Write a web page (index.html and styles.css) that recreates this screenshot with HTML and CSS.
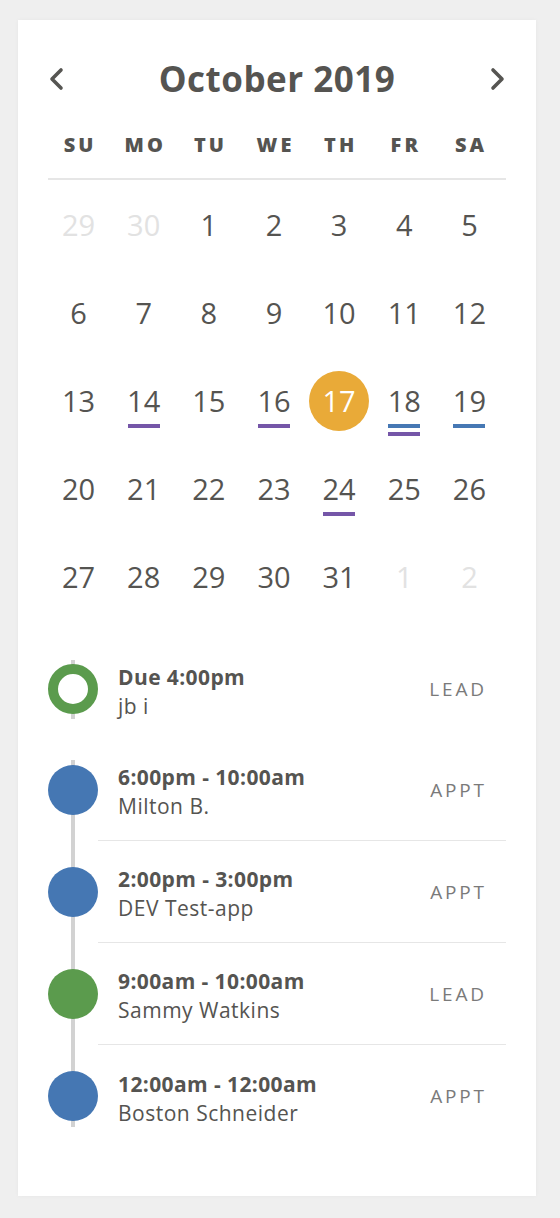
FILE: index.html
```html
<!DOCTYPE html>
<html>
<head>
<meta charset="utf-8">
<link rel="stylesheet" href="styles.css">
</head>
<body>
<div class="card">
  <div class="header">
    <button class="nav">
      <svg width="16" height="24" viewBox="0 0 16 24"><path d="M13 3 L4 12 L13 21" fill="none" stroke="#565552" stroke-width="3.6" stroke-linecap="round" stroke-linejoin="round"/></svg>
    </button>
    <h1 class="title">October 2019</h1>
    <button class="nav">
      <svg width="16" height="24" viewBox="0 0 16 24"><path d="M3 3 L12 12 L3 21" fill="none" stroke="#565552" stroke-width="3.6" stroke-linecap="round" stroke-linejoin="round"/></svg>
    </button>
  </div>
  <div class="weekdays">
    <span>SU</span><span>MO</span><span>TU</span><span>WE</span><span>TH</span><span>FR</span><span>SA</span>
  </div>
  <div class="days">
    <div class="day muted"><span class="num">29</span></div>
    <div class="day muted"><span class="num">30</span></div>
    <div class="day"><span class="num">1</span></div>
    <div class="day"><span class="num">2</span></div>
    <div class="day"><span class="num">3</span></div>
    <div class="day"><span class="num">4</span></div>
    <div class="day"><span class="num">5</span></div>

    <div class="day"><span class="num">6</span></div>
    <div class="day"><span class="num">7</span></div>
    <div class="day"><span class="num">8</span></div>
    <div class="day"><span class="num">9</span></div>
    <div class="day"><span class="num">10</span></div>
    <div class="day"><span class="num">11</span></div>
    <div class="day"><span class="num">12</span></div>

    <div class="day"><span class="num">13</span></div>
    <div class="day"><span class="num">14</span><span class="marks"><i class="bar purple"></i></span></div>
    <div class="day"><span class="num">15</span></div>
    <div class="day"><span class="num">16</span><span class="marks"><i class="bar purple"></i></span></div>
    <div class="day today"><span class="num">17</span></div>
    <div class="day"><span class="num">18</span><span class="marks"><i class="bar blue"></i><i class="bar purple"></i></span></div>
    <div class="day"><span class="num">19</span><span class="marks"><i class="bar blue"></i></span></div>

    <div class="day"><span class="num">20</span></div>
    <div class="day"><span class="num">21</span></div>
    <div class="day"><span class="num">22</span></div>
    <div class="day"><span class="num">23</span></div>
    <div class="day"><span class="num">24</span><span class="marks"><i class="bar purple"></i></span></div>
    <div class="day"><span class="num">25</span></div>
    <div class="day"><span class="num">26</span></div>

    <div class="day"><span class="num">27</span></div>
    <div class="day"><span class="num">28</span></div>
    <div class="day"><span class="num">29</span></div>
    <div class="day"><span class="num">30</span></div>
    <div class="day"><span class="num">31</span></div>
    <div class="day muted"><span class="num">1</span></div>
    <div class="day muted"><span class="num">2</span></div>
  </div>

  <div class="agenda">
    <div class="group single">
      <div class="item">
        <span class="dot ring green"></span>
        <div class="body">
          <div class="text"><div class="time">Due 4:00pm</div><div class="name">jb i</div></div>
          <span class="tag">LEAD</span>
        </div>
      </div>
    </div>
    <div class="group">
      <div class="item">
        <span class="dot blue"></span>
        <div class="body">
          <div class="text"><div class="time">6:00pm - 10:00am</div><div class="name">Milton B.</div></div>
          <span class="tag">APPT</span>
        </div>
      </div>
      <div class="item">
        <span class="dot blue"></span>
        <div class="body">
          <div class="text"><div class="time">2:00pm - 3:00pm</div><div class="name">DEV Test-app</div></div>
          <span class="tag">APPT</span>
        </div>
      </div>
      <div class="item">
        <span class="dot green"></span>
        <div class="body">
          <div class="text"><div class="time">9:00am - 10:00am</div><div class="name">Sammy Watkins</div></div>
          <span class="tag">LEAD</span>
        </div>
      </div>
      <div class="item">
        <span class="dot blue"></span>
        <div class="body">
          <div class="text"><div class="time">12:00am - 12:00am</div><div class="name">Boston Schneider</div></div>
          <span class="tag">APPT</span>
        </div>
      </div>
    </div>
  </div>
</div>
</body>
</html>
```

FILE: styles.css
```css
* { box-sizing: border-box; }

html, body {
  margin: 0;
  padding: 0;
}

body {
  background: #efefef;
  font-family: "Open Sans", "Noto Sans", sans-serif;
  color: #555451;
  padding: 20px 24px 20px 18px;
}

.card {
  width: 518px;
  background: #ffffff;
  padding: 40px 30px 49px 30px;
  box-shadow: 0 0 4px rgba(0, 0, 0, 0.04);
}

.header {
  height: 38px;
  display: flex;
  align-items: center;
  justify-content: space-between;
}

.nav {
  border: 0;
  background: none;
  padding: 0;
  width: 16px;
  height: 24px;
  display: flex;
}

.title {
  margin: 0;
  font-size: 35px;
  font-weight: 700;
  line-height: 38px;
  letter-spacing: 0.5px;
  color: #555451;
}

.weekdays {
  margin: 31px 0 0 -2px;
  width: 456px;
  display: grid;
  grid-template-columns: repeat(7, 1fr);
  height: 30px;
  align-items: center;
  font-size: 20px;
  font-weight: 800;
  letter-spacing: 3px;
  text-indent: 3px;
  text-align: center;
}

.days {
  margin: 21px 0 0 -2px;
  width: 456px;
  display: grid;
  grid-template-columns: repeat(7, 1fr);
  grid-auto-rows: 88px;
  position: relative;
}

.days::before {
  content: "";
  position: absolute;
  left: 2px;
  top: -2px;
  width: 458px;
  height: 2px;
  background: #e6e6e6;
}

.day {
  display: flex;
  flex-direction: column;
  align-items: center;
  padding-top: 27px;
}

.num {
  display: flex;
  align-items: center;
  justify-content: center;
  height: 36px;
  min-width: 60px;
  font-size: 29px;
  line-height: 36px;
}

.muted .num {
  color: #e2e2e2;
}

.today .num {
  width: 60px;
  height: 60px;
  margin-top: -12px;
  border-radius: 50%;
  background: #e9aa38;
  color: #ffffff;
}

.marks {
  display: flex;
  flex-direction: column;
  gap: 4px;
  margin-top: 5px;
}

.bar {
  display: block;
  width: 32px;
  height: 4px;
}

.bar.purple { background: #7556a8; }
.bar.blue { background: #4678b4; }

.agenda {
  margin-top: 19px;
}

.group {
  position: relative;
}

.group::before {
  content: "";
  position: absolute;
  left: 23px;
  width: 4px;
  top: 21px;
  bottom: 20px;
  background: #d2d2d2;
}

.item {
  display: flex;
  height: 102px;
}

.single .item {
  height: 100px;
}

.dot {
  position: relative;
  z-index: 1;
  flex: 0 0 50px;
  width: 50px;
  height: 50px;
  border-radius: 50%;
  align-self: center;
}

.group .item:not(:last-child) .dot {
  margin-top: -1px;
}

.dot.green { background: #5b9b4d; }
.dot.blue { background: #4577b3; }
.dot.ring {
  background: #ffffff;
  border: 10px solid #5b9b4d;
}

.body {
  flex: 1;
  display: flex;
  align-items: center;
  justify-content: space-between;
  padding: 0 22px 0 20px;
  border-bottom: 1px solid #e6e6e6;
}

.item:last-child .body {
  border-bottom: 0;
}

.text {
  padding-top: 4px;
}

.time {
  font-size: 21px;
  font-weight: 700;
  line-height: 30px;
  letter-spacing: 0.4px;
}

.name {
  font-size: 21px;
  line-height: 29px;
  letter-spacing: 0.5px;
}

.tag {
  font-size: 19px;
  letter-spacing: 2.8px;
  color: #7a7a7a;
  margin-right: -2.8px;
}
```
